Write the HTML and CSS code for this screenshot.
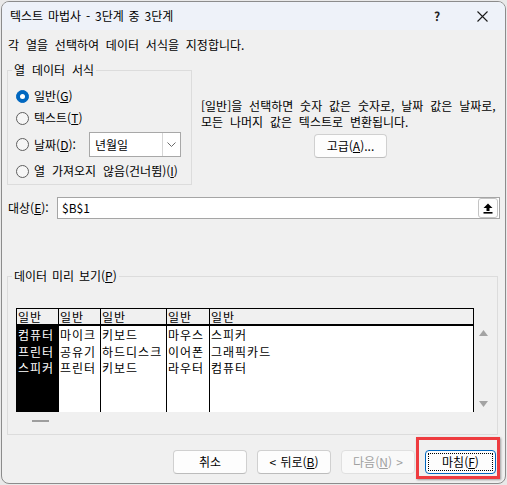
FILE: index.html
```html
<!DOCTYPE html>
<html lang="ko">
<head>
<meta charset="utf-8">
<title>텍스트 마법사 - 3단계 중 3단계</title>
<link rel="stylesheet" href="styles.css">
</head>
<body>
<div class="window">
  <div class="titlebar">
    <span class="title">텍스트 마법사 - 3단계 중 3단계</span>
    <span class="cap-btn help">?</span>
    <span class="cap-btn close"><svg width="11" height="11" viewBox="0 0 11 11"><path d="M0.5 0.5L10.5 10.5M10.5 0.5L0.5 10.5" stroke="#1a1a1a" stroke-width="1.1" fill="none"/></svg></span>
  </div>
  <div class="content">
    <p class="intro">각 열을 선택하여 데이터 서식을 지정합니다.</p>
    <div class="top">
      <fieldset class="group format">
        <legend>열 데이터 서식</legend>
        <div class="radios">
          <div class="radio"><span class="dot checked"></span><span>일반(<u>G</u>)</span></div>
          <div class="radio"><span class="dot"></span><span>텍스트(<u>T</u>)</span></div>
          <div class="radio date"><span class="dot"></span><span>날짜(<u>D</u>):</span>
            <span class="combo"><span class="combo-val">년월일</span><span class="combo-btn"><svg width="9" height="5" viewBox="0 0 9 5"><path d="M0.5 0.5L4.5 4.5L8.5 0.5" stroke="#6a6a6a" stroke-width="1" fill="none"/></svg></span></span>
          </div>
          <div class="radio"><span class="dot"></span><span>열 가져오지 않음(건너뜀)(<u>I</u>)</span></div>
        </div>
      </fieldset>
      <div class="desc">
        <p>[일반]을 선택하면 숫자 값은 숫자로, 날짜 값은 날짜로,<br>모든 나머지 값은 텍스트로 변환됩니다.</p>
        <span class="btn adv">고급(<u>A</u>)...</span>
      </div>
    </div>
    <div class="target">
      <span class="target-label">대상(<u>E</u>):</span>
      <span class="field"><span class="field-val">$B$1</span><span class="collapse"><svg width="10" height="11" viewBox="0 0 10 11"><path d="M5 0.5L9.5 5H6.5V8H3.5V5H0.5Z" fill="#000"/><rect x="0.5" y="9" width="9" height="1.6" fill="#000"/></svg></span></span>
    </div>
    <fieldset class="group preview">
      <legend>데이터 미리 보기(<u>P</u>)</legend>
      <div class="pv">
        <div class="pv-main">
          <div class="pv-table">
            <div class="pv-col sel c1"><div class="pv-head">일반</div><div class="pv-body"><div>컴퓨터</div><div>프린터</div><div>스피커</div></div></div>
            <div class="pv-col c2"><div class="pv-head">일반</div><div class="pv-body"><div>마이크</div><div>공유기</div><div>프린터</div></div></div>
            <div class="pv-col c3"><div class="pv-head">일반</div><div class="pv-body"><div>키보드</div><div>하드디스크</div><div>키보드</div></div></div>
            <div class="pv-col c4"><div class="pv-head">일반</div><div class="pv-body"><div>마우스</div><div>이어폰</div><div>라우터</div></div></div>
            <div class="pv-col c5"><div class="pv-head">일반</div><div class="pv-body"><div>스피커</div><div>그래픽카드</div><div>컴퓨터</div></div></div>
          </div>
          <div class="vscroll">
            <svg width="9" height="6" viewBox="0 0 9 6"><path d="M4.5 0L9 6H0Z" fill="#a3a3a3"/></svg>
            <svg width="9" height="6" viewBox="0 0 9 6"><path d="M0 0H9L4.5 6Z" fill="#a3a3a3"/></svg>
          </div>
        </div>
        <div class="hscroll"><span class="thumb"></span></div>
      </div>
    </fieldset>
  </div>
  <div class="buttons">
    <span class="btn w74">취소</span>
    <span class="btn w74">&lt; 뒤로(<u>B</u>)</span>
    <span class="btn w74 disabled">다음(<u>N</u>) &gt;</span>
    <span class="btn w71 default"><span class="focus">마침(<u>F</u>)</span></span>
  </div>
  <div class="highlight"></div>
</div>
</body>
</html>
```
FILE: styles.css
```css
* { box-sizing: border-box; }
html, body { margin: 0; padding: 0; }
body {
  background: #e9e9e9;
  font-family: "Noto Sans CJK KR", "Noto Sans", sans-serif;
  font-size: 12px;
  line-height: 16px;
  color: #000;
  word-spacing: 3.5px;
}
u { text-decoration: underline; text-underline-offset: 1px; }
p { margin: 0; }

.window {
  position: relative;
  margin: 1px 0 0 1px;
  width: 505px;
  height: 483px;
  border: 1px solid #8c8c8c;
  border-radius: 8px;
  overflow: hidden;
  background: #f0f0f0;
  display: flex;
  flex-direction: column;
}

.titlebar {
  height: 28px;
  background: #eef2f9;
  display: flex;
  align-items: center;
  padding-left: 8px;
  word-spacing: 1.5px;
}
.title { flex: 1; }
.cap-btn {
  width: 46px;
  height: 28px;
  display: flex;
  align-items: center;
  justify-content: center;
}
.help { font-size: 12px; font-weight: bold; color: #222; padding-left: 2px; }

.content { padding: 0 5px; display: flex; flex-direction: column; }
.intro { margin: 7px 0 0 1px; }

.top { display: flex; margin-top: 9px; }

.group {
  margin: 0;
  padding: 0;
  border: 1px solid #dcdcdc;
  min-width: 0;
}
.group legend {
  margin-left: 4px;
  padding: 0 2px;
  line-height: 16px;
}
.preview legend { word-spacing: 1.5px; }

.format { width: 185px; height: 123px; flex: none; }
.radios {
  display: flex;
  flex-direction: column;
  gap: 6px;
  padding: 10px 10px 0 8px;
}
.radio { display: flex; align-items: center; height: 16px; }
.radio.date { height: 25px; }
.dot {
  width: 13px;
  height: 13px;
  border-radius: 50%;
  border: 1px solid #5f5f5f;
  background: #f6f6f6;
  margin-right: 5px;
  flex: none;
  display: flex;
  align-items: center;
  justify-content: center;
}
.dot.checked { background: #0067c0; border-color: #0067c0; }
.dot.checked::after {
  content: "";
  width: 5px;
  height: 5px;
  border-radius: 50%;
  background: #fff;
}
.combo {
  margin-left: auto;
  width: 92px;
  height: 25px;
  border: 1px solid #a8a8a8;
  background: #fff;
  display: flex;
}
.combo-val { flex: 1; padding-left: 5px; line-height: 23px; }
.combo-btn {
  width: 18px;
  border-left: 1px solid #d6d6d6;
  display: flex;
  align-items: center;
  justify-content: center;
}

.desc {
  flex: 1;
  padding: 36px 0 0 9px;
  display: flex;
  flex-direction: column;
  align-items: center;
}
.desc p { align-self: stretch; }

.btn {
  display: inline-flex;
  align-items: center;
  justify-content: center;
  height: 24px;
  background: #fdfdfd;
  border: 1px solid #d0d0d0;
  border-bottom-color: #bcbcbc;
  border-radius: 4px;
  word-spacing: 1px;
}
.adv { width: 73px; margin-top: 4px; }

.target { display: flex; align-items: center; margin-top: 12px; }
.target-label { margin-left: 1px; width: 49px; }
.field {
  flex: 1;
  height: 22px;
  border: 1px solid #a5a5a5;
  background: #fff;
  display: flex;
  align-items: center;
}
.field-val { flex: 1; padding-left: 4px; }
.collapse {
  width: 20px;
  height: 20px;
  margin-right: 1px;
  border: 1px solid #c4c4c4;
  border-radius: 3px;
  background: #fdfdfd;
  display: flex;
  align-items: center;
  justify-content: center;
}

.preview { margin: 49px 2px 0 0; height: 167px; }
.pv { padding: 24px 0 0 8px; }
.pv-main { display: flex; }
.pv-table {
  width: 458px;
  height: 104px;
  display: flex;
  border-top: 1px solid #000;
  border-right: 1px solid #000;
  font-size: 12px;
  letter-spacing: 1px;
  word-spacing: 0;
}
.pv-col { display: flex; flex-direction: column; border-left: 1px solid #000; }
.c1 { width: 42px; }
.c2 { width: 42px; }
.c3 { width: 66px; }
.c4 { width: 43px; }
.c5 { flex: 1; }
.pv-head {
  height: 17px;
  line-height: 16px;
  padding-left: 1px;
  border-bottom: 2px solid #000;
  background: #f0f0f0;
}
.pv-body {
  flex: 1;
  background: #fff;
  padding-left: 1px;
  line-height: 17px;
  white-space: nowrap;
}
.pv-body > div { height: 16.5px; }
.sel .pv-body { background: #000; color: #fff; }

.vscroll {
  width: 18px;
  padding: 22px 0 5px 1px;
  display: flex;
  flex-direction: column;
  justify-content: space-between;
  align-items: center;
}
.hscroll { height: 22px; padding: 8px 0 0 16px; }
.thumb { display: block; width: 17px; height: 2px; background: #9e9e9e; }

.buttons {
  display: flex;
  justify-content: flex-end;
  gap: 10px;
  margin-top: 15px;
  padding-right: 9px;
}
.w74 { width: 74px; }
.w71 { width: 71px; }
.disabled { color: #a0a0a0; border-color: #e0e0e0; background: #f9f9f9; }
.default { border-color: #0067c0; padding: 2px; }
.focus {
  flex: 1;
  align-self: stretch;
  display: flex;
  align-items: center;
  justify-content: center;
  border: 1px dotted #000;
}

.highlight {
  position: absolute;
  left: 414px;
  top: 435px;
  width: 84px;
  height: 42px;
  border: 3px solid #ee3b3f;
  box-shadow: 1px 1px 2px rgba(0, 0, 0, 0.35);
}
```
